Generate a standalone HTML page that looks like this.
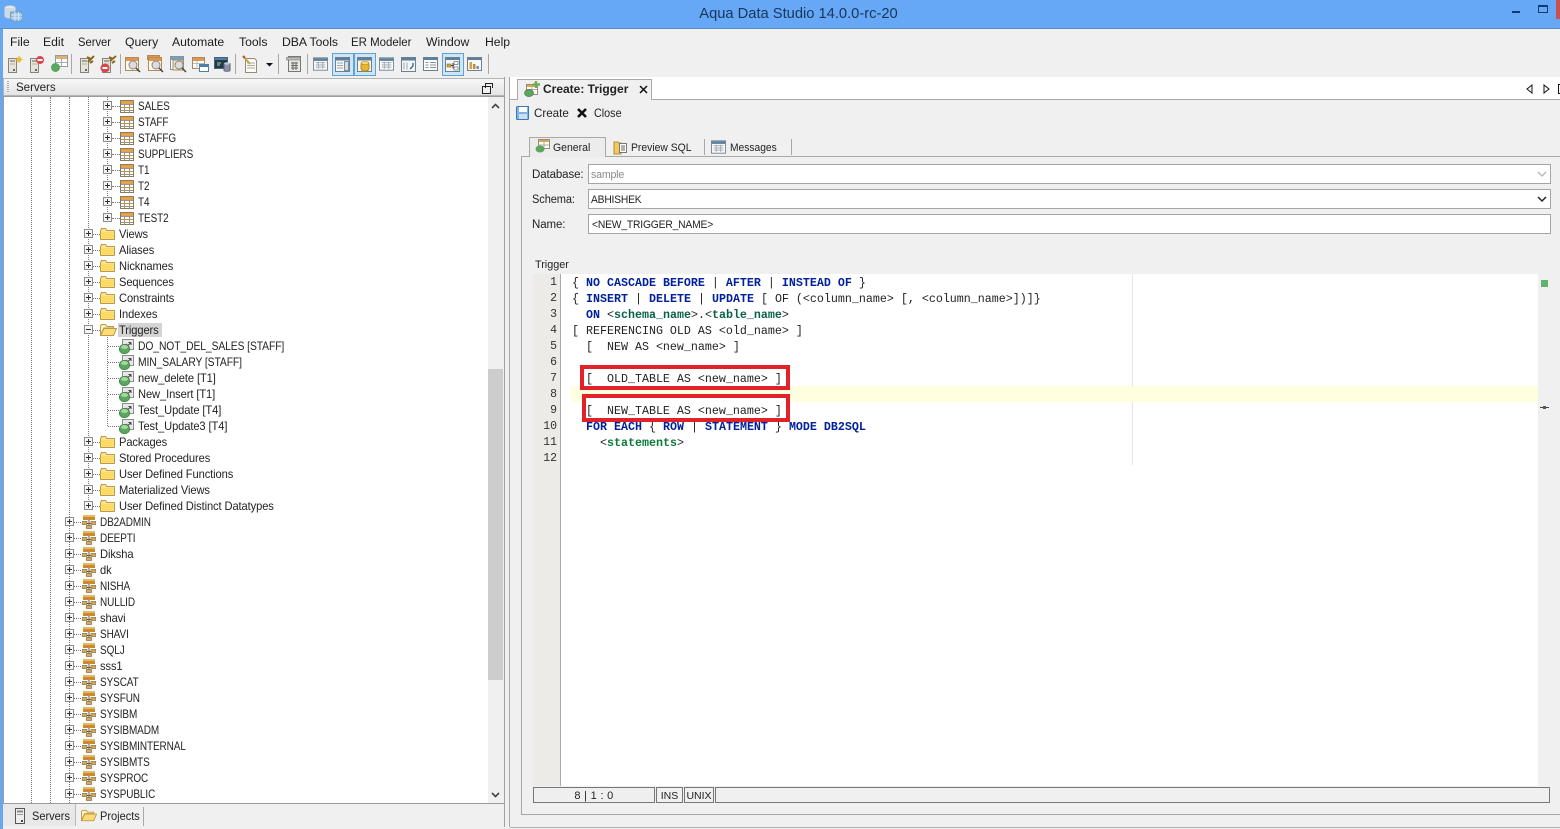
<!DOCTYPE html>
<html><head><meta charset="utf-8"><title>Aqua Data Studio</title>
<style>
html,body{margin:0;padding:0;width:1560px;height:829px;overflow:hidden;background:#f0f0f0}
body{position:relative;font:12px/16px "Liberation Sans",sans-serif;color:#222}
.a,.r,.m,.t,.h,.v,svg.i{position:absolute}
.m{top:34px;font-size:12.2px;color:#1c1c1c}
.r{height:16px;white-space:nowrap;font-size:11.6px;letter-spacing:-.1px}
.r span{top:1px;transform-origin:0 0;transform:scaleX(.96)}
.r.u span{transform:scaleX(.86)}
.r.w span{transform:scaleX(.89)}
.h{height:0;border-top:1px dotted #777}
.v{width:0;border-left:1px dotted #777}
.c{position:absolute;left:0;white-space:pre;font:11.66px/16px "Liberation Mono",monospace;color:#222}
.b{font-weight:bold;color:#00209c}.g{font-weight:bold;color:#0a7a3a}
.n{position:absolute;left:533px;width:24px;margin-top:1px;text-align:right;font:11.5px/16px "Liberation Mono",monospace;color:#333}
.f{position:absolute;left:588px;height:18px;background:#fff;border:1px solid #a5a5a5;line-height:20px;font-size:11.4px;letter-spacing:-.2px;padding-left:2px;box-sizing:content-box;width:959px}
.f span{display:inline-block;transform-origin:0 50%;transform:scaleX(.93)}
.l{position:absolute;left:532px;font-size:11.5px;letter-spacing:-.1px}
.sep{position:absolute;top:54px;width:1px;height:20px;background:#a8a8a8}
.hl{position:absolute;top:53px;height:21px;background:#cde6f7;border:1px solid #5ea3d6;box-sizing:content-box}
.sx{transform-origin:0 0;transform:scaleX(.92)}
</style></head><body>
<svg width="0" height="0" style="position:absolute"><defs>
<symbol id="tb" viewBox="0 0 14 13"><rect x=".5" y=".5" width="13" height="12" fill="#fff" stroke="#8a7b62"/><rect x="1" y="1" width="12" height="3" fill="#e3a24e"/><path d="M1 4.500h12M1 7.500h12M1 10.500h12M4.500 4v8M9.500 4v8" stroke="#a8946f" fill="none"/></symbol>
<symbol id="fo" viewBox="0 0 15 12"><path d="M.5 2.500V11c0 .3.2.5.5.5h13c.3 0 .5-.2.5-.5V3c0-.3-.2-.5-.5-.5H7L5.500.5H1.500z" fill="#fbe38a" stroke="#b99a45"/><rect x="1.500" y="4" width="12" height="6.500" fill="#fdd966"/></symbol>
<symbol id="fx" viewBox="0 0 17 12"><path d="M.5 11V2L1.500.5h4L7 2.500h6.500V4H4z" fill="#fff3c0" stroke="#b99a45"/><path d="M.5 11.500L4 4.500h12.500l-3 7z" fill="#fbdc78" stroke="#b99a45"/></symbol>
<symbol id="sc" viewBox="0 0 14 14"><rect x="1" y="0" width="12" height="5" fill="#c98a2e"/><rect x="1" y="0" width="12" height="2" fill="#e7b66a"/><path d="M7 5v7M1 8.500h12" stroke="#6d5a36"/><rect x="0" y="6.500" width="5" height="3" fill="#d9a95b" stroke="#6d5a36" stroke-width=".6"/><rect x="9" y="6.500" width="5" height="3" fill="#d9a95b" stroke="#6d5a36" stroke-width=".6"/><rect x="4.500" y="10.500" width="5" height="3" fill="#d9a95b" stroke="#6d5a36" stroke-width=".6"/></symbol>
<symbol id="tr" viewBox="0 0 15 15"><rect x="3.500" y=".5" width="11" height="10" fill="#e8e8e8" stroke="#8c8c8c"/><path d="M7 5l2 1.500 3-3M12 3.500v2.500M12 3.500H9.500" fill="none" stroke="#444"/><ellipse cx="5.500" cy="10" rx="5.200" ry="4.700" fill="#5aa75f" stroke="#3d7c44" stroke-width=".7"/><ellipse cx="5.500" cy="8" rx="3.500" ry="2" fill="#a6d6a4"/></symbol>
<symbol id="srv" viewBox="0 0 12 17"><rect x="1.500" y="4.500" width="8" height="12" fill="#eee" stroke="#555"/><rect x="3" y="6" width="5" height="2" fill="#999"/><rect x="3" y="9" width="5" height="1" fill="#aaa"/><rect x="6.500" y="13" width="2" height="2" fill="#555"/></symbol>
<symbol id="blu" viewBox="0 0 17 15"><rect x=".5" y=".5" width="16" height="14" fill="#fafafa" stroke="#6e7f8f"/><rect x="1" y="1" width="15" height="3" fill="#5c7f9e"/><path d="M3 6h11M3 8.500h11M3 11h11M6 5v8M11 5v8" stroke="#9aa7b2"/></symbol>
<symbol id="mag" viewBox="0 0 17 17"><rect x=".5" y="1.500" width="13" height="13" fill="#fff8ec" stroke="#b08a5a"/><rect x="1" y="2" width="12" height="3" fill="#e0964a"/><circle cx="8" cy="9" r="4" fill="#dcdcdc" stroke="#888"/><path d="M11 12l4 4" stroke="#444" stroke-width="1.500"/></symbol>
<symbol id="sv2" viewBox="0 0 19 19"><rect x="3.500" y="3.500" width="8" height="14" fill="#e6e3d8" stroke="#85847a"/><rect x="5" y="5" width="5" height="2" fill="#a5a39a"/><rect x="5" y="8.500" width="5" height="1" fill="#b5b3aa"/><rect x="8" y="14" width="2" height="2" fill="#666"/></symbol>
<g id="px"><rect x=".5" y=".5" width="8" height="8" fill="#f4f4f4" stroke="#8d8d8d"/><path d="M2 4.500h5M4.500 2v5" stroke="#333"/></g><g id="mn"><rect x=".5" y=".5" width="8" height="8" fill="#f4f4f4" stroke="#8d8d8d"/><path d="M2 4.500h5" stroke="#333"/></g>
</defs></svg>

<!-- title bar -->
<div class="a" style="left:0;top:0;width:1560px;height:28px;background:#66a8f5;border-bottom:1px solid #5b8fc9"></div>
<svg class="i" style="left:3px;top:4px" width="19" height="18" viewBox="0 0 19 18"><ellipse cx="7" cy="4" rx="5.500" ry="2.500" fill="#dfe9f2" stroke="#aebfcd"/><path d="M1.500 4v8c0 1.300 2.500 2.500 5.500 2.500V4" fill="#cdd9e4"/><path d="M12.500 4v4H7V4z" fill="#cdd9e4"/><rect x="8" y="8" width="11" height="9" fill="#9dc2de" stroke="#6f9cbc"/><path d="M8 11h11M8 14h11M12 8v9M15.500 8v9" stroke="#d5e6f2"/></svg>
<div class="a" style="left:0;top:6px;width:1597px;text-align:center;font-size:14.7px;line-height:17px;color:#17365d">Aqua Data Studio 14.0.0-rc-20</div>
<div class="a" style="left:1512px;top:11px;width:8px;height:2px;background:#0f3b6e"></div>
<div class="a" style="left:1538px;top:5px;width:8px;height:5px;border:1px solid #0f3b6e;border-top-width:2px"></div>
<div class="a" style="left:1556px;top:0;width:4px;height:19px;background:#c75050"></div>
<div class="a" style="left:0;top:29px;width:3px;height:800px;background:#6aa6ee"></div>

<!-- menu -->
<div class="m" style="left:10px">File</div><div class="m" style="left:43px">Edit</div><div class="m sx" style="left:78px">Server</div><div class="m" style="left:125px">Query</div><div class="m" style="left:172px">Automate</div><div class="m" style="left:239px">Tools</div><div class="m" style="left:282px">DBA Tools</div><div class="m" style="left:351px;transform-origin:0 0;transform:scaleX(.94)">ER Modeler</div><div class="m" style="left:426px">Window</div><div class="m" style="left:485px">Help</div>

<!-- toolbar -->
<div class="hl" style="left:332px;width:20px"></div><div class="hl" style="left:354px;width:20px"></div><div class="hl" style="left:442px;width:20px"></div>
<div class="sep" style="left:71px"></div><div class="sep" style="left:120px"></div><div class="sep" style="left:235px"></div><div class="sep" style="left:278px"></div><div class="sep" style="left:307px"></div><div class="sep" style="left:488px"></div>
<svg class="i" style="left:5px;top:55px" width="19" height="19"><use href="#sv2"/><path d="M14 1v7M10.500 4.500h7M12 2.500l4 4M16 2.500l-4 4" stroke="#e8b830" stroke-width="1.200"/></svg>
<svg class="i" style="left:27px;top:55px" width="19" height="19"><use href="#sv2"/><circle cx="13" cy="5" r="4" fill="#d9474b"/><rect x="10.500" y="4" width="5" height="2" fill="#fff"/></svg>
<svg class="i" style="left:50px;top:55px" width="19" height="19"><rect x="5.500" y=".5" width="12" height="11" fill="#fff" stroke="#999"/><rect x="6" y="1" width="11" height="3" fill="#d9b27a"/><path d="M6 7.500h11M11.500 4v7" stroke="#aaa"/><circle cx="5.500" cy="12.500" r="4.500" fill="#5aa75f"/></svg>
<svg class="i" style="left:77px;top:55px" width="19" height="19"><use href="#sv2"/><path d="M11 7l6-6M10 2l4 2M13 8l3-2" stroke="#8a6a20" stroke-width="2"/></svg>
<svg class="i" style="left:99px;top:55px" width="19" height="19"><use href="#sv2"/><path d="M11 6l6-5M10 2l4 2M13 8l3-2" stroke="#8a6a20" stroke-width="2"/><circle cx="6" cy="13" r="4.500" fill="#d9474b"/><rect x="3.500" y="12" width="5" height="2" fill="#fff"/></svg>
<svg class="i" style="left:125px;top:56px" width="17" height="17"><use href="#mag"/></svg>
<svg class="i" style="left:147px;top:55px" width="18" height="18"><rect x=".5" y=".5" width="12" height="4" fill="#e0964a" stroke="#b08a5a"/><use href="#mag" x="1" y="1" width="17" height="17"/></svg>
<svg class="i" style="left:170px;top:56px" width="17" height="17"><rect x=".5" y=".5" width="13" height="13" fill="#fff" stroke="#7f96a9"/><rect x="1" y="1" width="12" height="3" fill="#7ca0bc"/><rect x="3" y="4" width="10" height="10" fill="#f1e6d3" stroke="#b08a5a"/><circle cx="9" cy="9" r="4" fill="#ddd" stroke="#888"/><path d="M12 12l4 4" stroke="#444" stroke-width="1.500"/></svg>
<svg class="i" style="left:192px;top:57px" width="17" height="15"><rect x=".5" y=".5" width="12" height="11" fill="#fff" stroke="#a88a62"/><rect x="1" y="1" width="11" height="3" fill="#df9850"/><path d="M1 6.500h11M5 4v8" stroke="#bbb"/><rect x="7.500" y="7.500" width="9" height="7" fill="#fff" stroke="#4f7fa6"/><rect x="8" y="8" width="8" height="2" fill="#4f7fa6"/></svg>
<svg class="i" style="left:214px;top:57px" width="17" height="15"><rect x=".5" y=".5" width="13" height="11" fill="#26374a" stroke="#46627e"/><rect x="1" y="1" width="12" height="2" fill="#4d7ea8"/><path d="M3 6h4M3 8h3" stroke="#9fe08f"/><path d="M10 6.500v7c0 1 6 1 6 0v-7z" fill="#8a94a4" stroke="#59657a"/><ellipse cx="13" cy="6.500" rx="3" ry="1.300" fill="#c0c8d4"/></svg>
<svg class="i" style="left:242px;top:55px" width="17" height="19"><path d="M3.500 3.500h9l2 2v12h-11z" fill="#fdfdf6" stroke="#8e8e7e"/><path d="M5 8h8M5 10.500h8M5 13h8" stroke="#a6a89a"/><path d="M1 1l7 8" stroke="#c9a04a" stroke-width="2"/><path d="M1 1l2 2" stroke="#c24b3f" stroke-width="2"/></svg>
<svg class="i" style="left:266px;top:63px" width="7" height="4"><path d="M0 0h7L3.500 3.500z" fill="#111"/></svg>
<svg class="i" style="left:286px;top:56px" width="16" height="17"><rect x="2.500" y=".5" width="12" height="15" fill="#e9e9e4" stroke="#777"/><rect x=".5" y="1.500" width="14" height="2.500" fill="#bbb" stroke="#777" stroke-width=".6"/><path d="M5 7h7M5 9.500h7M5 12h7M7 6v8M10 6v8" stroke="#666"/></svg>
<svg class="i" style="left:313px;top:57px" width="15" height="14"><use href="#blu" width="15" height="14"/></svg>
<svg class="i" style="left:335px;top:57px" width="15" height="15"><rect x=".5" y=".5" width="14" height="14" fill="#f5f5f5" stroke="#6e7f8f"/><rect x="1" y="1" width="13" height="2.500" fill="#5c7f9e"/><path d="M2 6h6M2 8.500h6M2 11h6" stroke="#9aa7b2"/><rect x="9.500" y="4.500" width="4" height="9" fill="#d6dde3" stroke="#7f8d99"/></svg>
<svg class="i" style="left:357px;top:57px" width="15" height="15"><rect x=".5" y=".5" width="14" height="14" fill="#f5f5f5" stroke="#6e7f8f"/><rect x="1" y="1" width="13" height="2.500" fill="#5c7f9e"/><rect x="4" y="5" width="8" height="9" rx="3" fill="#eab52f" stroke="#b58a20"/><ellipse cx="8" cy="6" rx="4" ry="1.500" fill="#f6d878" stroke="#b58a20" stroke-width=".6"/></svg>
<svg class="i" style="left:379px;top:57px" width="15" height="14"><use href="#blu" width="15" height="14"/></svg>
<svg class="i" style="left:401px;top:57px" width="15" height="15"><rect x=".5" y=".5" width="14" height="14" fill="#f5f5f5" stroke="#6e7f8f"/><rect x="1" y="1" width="13" height="2.500" fill="#5c7f9e"/><path d="M3 5.500v7M6 5.500v7" stroke="#9aa7b2"/><path d="M9 12l3-3M12 9v-3" stroke="#345f84" stroke-width="1.300"/></svg>
<svg class="i" style="left:423px;top:57px" width="15" height="14"><rect x=".5" y=".5" width="14" height="13" fill="#fbfbfb" stroke="#6e7f8f"/><rect x="1" y="1" width="13" height="2" fill="#5c7f9e"/><path d="M2.500 5.500h3M2.500 8h3M2.500 10.500h3M7 5.500h6M7 8h6M7 10.500h6" stroke="#8795a1"/></svg>
<svg class="i" style="left:445px;top:57px" width="15" height="15"><rect x=".5" y=".5" width="14" height="14" fill="#f8f8f8" stroke="#6e7f8f"/><rect x="1" y="1" width="13" height="2" fill="#5c7f9e"/><rect x="2" y="7" width="4" height="3" fill="#d9a344" stroke="#8c6a25" stroke-width=".6"/><rect x="9" y="4.500" width="4" height="3" fill="#fff" stroke="#555" stroke-width=".6"/><rect x="9" y="10" width="4" height="3" fill="#fff" stroke="#555" stroke-width=".6"/><path d="M6 8.500h3M8 6v5.500" stroke="#444" fill="none"/></svg>
<svg class="i" style="left:467px;top:57px" width="15" height="15"><rect x=".5" y=".5" width="14" height="13" fill="#f8f8f8" stroke="#6e7f8f"/><rect x="1" y="1" width="13" height="2" fill="#5c7f9e"/><rect x="2.500" y="5" width="2.500" height="7" fill="#d9a344"/><rect x="6" y="7" width="2.500" height="5" fill="#c8874a"/><rect x="9.500" y="9" width="2.500" height="3" fill="#6f90ae"/></svg>

<!-- left panel -->
<div class="a" style="left:3px;top:78px;width:502px;background:linear-gradient(#f7f7f7,#e4e4e4);border:1px solid #b4b4b4;box-sizing:border-box;height:18px"></div>
<div class="a" style="left:7px;top:81px;width:2px;height:12px;background:repeating-linear-gradient(#aaa 0 1px,#f0f0f0 1px 2px)"></div>
<div class="a" style="left:16px;top:80px;font-size:11.6px;letter-spacing:-.05px">Servers</div>
<div class="a" style="left:482px;top:86px;width:7px;height:6px;border:1px solid #222;background:#f0f0f0"></div>
<div class="a" style="left:485px;top:83px;width:6px;height:4px;border:1px solid #222;border-bottom:0"></div>
<div class="a" style="left:3px;top:96px;width:502px;height:708px;background:#fff;border:1px solid #9c9c9c;box-sizing:border-box"></div>
<div class="a" style="left:488px;top:97px;width:16px;height:706px;background:#f0f0f0"></div>
<div class="a" style="left:488px;top:369px;width:15px;height:311px;background:#cdcdcd"></div>
<svg class="i" style="left:491px;top:103px" width="9" height="6"><path d="M1 5l3.500-3.500L8 5" fill="none" stroke="#444" stroke-width="1.600"/></svg>
<svg class="i" style="left:491px;top:792px" width="9" height="6"><path d="M1 1l3.500 3.500L8 1" fill="none" stroke="#444" stroke-width="1.600"/></svg>
<div class="a" style="left:504px;top:77px;width:1px;height:750px;background:#a0a0a0"></div>

<!-- tree guide lines -->
<div class="v" style="left:31px;top:97px;height:706px"></div>
<div class="v" style="left:50px;top:97px;height:706px"></div>
<div class="v" style="left:69px;top:97px;height:706px"></div>
<div class="v" style="left:88px;top:97px;height:409px"></div>
<div class="v" style="left:107px;top:97px;height:121px"></div>
<div class="v" style="left:107px;top:334px;height:92px"></div>

<!-- level 3 tables -->
<div class="r u" style="left:103px;top:98px;width:200px"><svg class="i" style="left:0;top:3px" width="9" height="9"><use href="#px"/></svg><div class="h" style="left:9px;top:8px;width:8px"></div><svg class="i" style="left:17px;top:2px" width="14" height="13"><use href="#tb"/></svg><span class="a" style="left:35px">SALES</span></div>
<div class="r u" style="left:103px;top:114px;width:200px"><svg class="i" style="left:0;top:3px" width="9" height="9"><use href="#px"/></svg><div class="h" style="left:9px;top:8px;width:8px"></div><svg class="i" style="left:17px;top:2px" width="14" height="13"><use href="#tb"/></svg><span class="a" style="left:35px">STAFF</span></div>
<div class="r u" style="left:103px;top:130px;width:200px"><svg class="i" style="left:0;top:3px" width="9" height="9"><use href="#px"/></svg><div class="h" style="left:9px;top:8px;width:8px"></div><svg class="i" style="left:17px;top:2px" width="14" height="13"><use href="#tb"/></svg><span class="a" style="left:35px">STAFFG</span></div>
<div class="r u" style="left:103px;top:146px;width:200px"><svg class="i" style="left:0;top:3px" width="9" height="9"><use href="#px"/></svg><div class="h" style="left:9px;top:8px;width:8px"></div><svg class="i" style="left:17px;top:2px" width="14" height="13"><use href="#tb"/></svg><span class="a" style="left:35px">SUPPLIERS</span></div>
<div class="r u" style="left:103px;top:162px;width:200px"><svg class="i" style="left:0;top:3px" width="9" height="9"><use href="#px"/></svg><div class="h" style="left:9px;top:8px;width:8px"></div><svg class="i" style="left:17px;top:2px" width="14" height="13"><use href="#tb"/></svg><span class="a" style="left:35px">T1</span></div>
<div class="r u" style="left:103px;top:178px;width:200px"><svg class="i" style="left:0;top:3px" width="9" height="9"><use href="#px"/></svg><div class="h" style="left:9px;top:8px;width:8px"></div><svg class="i" style="left:17px;top:2px" width="14" height="13"><use href="#tb"/></svg><span class="a" style="left:35px">T2</span></div>
<div class="r u" style="left:103px;top:194px;width:200px"><svg class="i" style="left:0;top:3px" width="9" height="9"><use href="#px"/></svg><div class="h" style="left:9px;top:8px;width:8px"></div><svg class="i" style="left:17px;top:2px" width="14" height="13"><use href="#tb"/></svg><span class="a" style="left:35px">T4</span></div>
<div class="r u" style="left:103px;top:210px;width:200px"><svg class="i" style="left:0;top:3px" width="9" height="9"><use href="#px"/></svg><div class="h" style="left:9px;top:8px;width:8px"></div><svg class="i" style="left:17px;top:2px" width="14" height="13"><use href="#tb"/></svg><span class="a" style="left:35px">TEST2</span></div>

<!-- folders -->
<div class="r" style="left:84px;top:226px;width:240px"><svg class="i" style="left:0;top:3px" width="9" height="9"><use href="#px"/></svg><div class="h" style="left:9px;top:8px;width:7px"></div><svg class="i" style="left:16px;top:2px" width="15" height="12"><use href="#fo"/></svg><span class="a" style="left:35px">Views</span></div>
<div class="r" style="left:84px;top:242px;width:240px"><svg class="i" style="left:0;top:3px" width="9" height="9"><use href="#px"/></svg><div class="h" style="left:9px;top:8px;width:7px"></div><svg class="i" style="left:16px;top:2px" width="15" height="12"><use href="#fo"/></svg><span class="a" style="left:35px">Aliases</span></div>
<div class="r" style="left:84px;top:258px;width:240px"><svg class="i" style="left:0;top:3px" width="9" height="9"><use href="#px"/></svg><div class="h" style="left:9px;top:8px;width:7px"></div><svg class="i" style="left:16px;top:2px" width="15" height="12"><use href="#fo"/></svg><span class="a" style="left:35px">Nicknames</span></div>
<div class="r" style="left:84px;top:274px;width:240px"><svg class="i" style="left:0;top:3px" width="9" height="9"><use href="#px"/></svg><div class="h" style="left:9px;top:8px;width:7px"></div><svg class="i" style="left:16px;top:2px" width="15" height="12"><use href="#fo"/></svg><span class="a" style="left:35px">Sequences</span></div>
<div class="r" style="left:84px;top:290px;width:240px"><svg class="i" style="left:0;top:3px" width="9" height="9"><use href="#px"/></svg><div class="h" style="left:9px;top:8px;width:7px"></div><svg class="i" style="left:16px;top:2px" width="15" height="12"><use href="#fo"/></svg><span class="a" style="left:35px">Constraints</span></div>
<div class="r" style="left:84px;top:306px;width:240px"><svg class="i" style="left:0;top:3px" width="9" height="9"><use href="#px"/></svg><div class="h" style="left:9px;top:8px;width:7px"></div><svg class="i" style="left:16px;top:2px" width="15" height="12"><use href="#fo"/></svg><span class="a" style="left:35px">Indexes</span></div>
<div class="a" style="left:118px;top:323px;width:44px;height:14px;background:#d4d4d4"></div>
<div class="r" style="left:84px;top:322px;width:240px"><svg class="i" style="left:0;top:3px" width="9" height="9"><use href="#mn"/></svg><div class="h" style="left:9px;top:8px;width:7px"></div><svg class="i" style="left:16px;top:2px" width="17" height="12"><use href="#fx"/></svg><span class="a" style="left:35px">Triggers</span></div>
<!-- triggers -->
<div class="r w" style="left:108px;top:338px;width:240px"><div class="h" style="left:0;top:8px;width:11px"></div><svg class="i" style="left:11px;top:1px" width="15" height="15"><use href="#tr"/></svg><span class="a" style="left:30px">DO_NOT_DEL_SALES [STAFF]</span></div>
<div class="r w" style="left:108px;top:354px;width:240px"><div class="h" style="left:0;top:8px;width:11px"></div><svg class="i" style="left:11px;top:1px" width="15" height="15"><use href="#tr"/></svg><span class="a" style="left:30px">MIN_SALARY [STAFF]</span></div>
<div class="r" style="left:108px;top:370px;width:240px"><div class="h" style="left:0;top:8px;width:11px"></div><svg class="i" style="left:11px;top:1px" width="15" height="15"><use href="#tr"/></svg><span class="a" style="left:30px">new_delete [T1]</span></div>
<div class="r" style="left:108px;top:386px;width:240px"><div class="h" style="left:0;top:8px;width:11px"></div><svg class="i" style="left:11px;top:1px" width="15" height="15"><use href="#tr"/></svg><span class="a" style="left:30px">New_Insert [T1]</span></div>
<div class="r" style="left:108px;top:402px;width:240px"><div class="h" style="left:0;top:8px;width:11px"></div><svg class="i" style="left:11px;top:1px" width="15" height="15"><use href="#tr"/></svg><span class="a" style="left:30px">Test_Update [T4]</span></div>
<div class="r" style="left:108px;top:418px;width:240px"><div class="h" style="left:0;top:8px;width:11px"></div><svg class="i" style="left:11px;top:1px" width="15" height="15"><use href="#tr"/></svg><span class="a" style="left:30px">Test_Update3 [T4]</span></div>
<div class="r" style="left:84px;top:434px;width:240px"><svg class="i" style="left:0;top:3px" width="9" height="9"><use href="#px"/></svg><div class="h" style="left:9px;top:8px;width:7px"></div><svg class="i" style="left:16px;top:2px" width="15" height="12"><use href="#fo"/></svg><span class="a" style="left:35px">Packages</span></div>
<div class="r" style="left:84px;top:450px;width:240px"><svg class="i" style="left:0;top:3px" width="9" height="9"><use href="#px"/></svg><div class="h" style="left:9px;top:8px;width:7px"></div><svg class="i" style="left:16px;top:2px" width="15" height="12"><use href="#fo"/></svg><span class="a" style="left:35px">Stored Procedures</span></div>
<div class="r" style="left:84px;top:466px;width:240px"><svg class="i" style="left:0;top:3px" width="9" height="9"><use href="#px"/></svg><div class="h" style="left:9px;top:8px;width:7px"></div><svg class="i" style="left:16px;top:2px" width="15" height="12"><use href="#fo"/></svg><span class="a" style="left:35px">User Defined Functions</span></div>
<div class="r" style="left:84px;top:482px;width:240px"><svg class="i" style="left:0;top:3px" width="9" height="9"><use href="#px"/></svg><div class="h" style="left:9px;top:8px;width:7px"></div><svg class="i" style="left:16px;top:2px" width="15" height="12"><use href="#fo"/></svg><span class="a" style="left:35px">Materialized Views</span></div>
<div class="r" style="left:84px;top:498px;width:240px"><svg class="i" style="left:0;top:3px" width="9" height="9"><use href="#px"/></svg><div class="h" style="left:9px;top:8px;width:7px"></div><svg class="i" style="left:16px;top:2px" width="15" height="12"><use href="#fo"/></svg><span class="a" style="left:35px">User Defined Distinct Datatypes</span></div>
<!-- schemas -->
<div class="r u" style="left:65px;top:514px;width:200px"><svg class="i" style="left:0;top:3px" width="9" height="9"><use href="#px"/></svg><div class="h" style="left:9px;top:8px;width:7px"></div><svg class="i" style="left:17px;top:1px" width="14" height="14"><use href="#sc"/></svg><span class="a" style="left:35px">DB2ADMIN</span></div>
<div class="r u" style="left:65px;top:530px;width:200px"><svg class="i" style="left:0;top:3px" width="9" height="9"><use href="#px"/></svg><div class="h" style="left:9px;top:8px;width:7px"></div><svg class="i" style="left:17px;top:1px" width="14" height="14"><use href="#sc"/></svg><span class="a" style="left:35px">DEEPTI</span></div>
<div class="r" style="left:65px;top:546px;width:200px"><svg class="i" style="left:0;top:3px" width="9" height="9"><use href="#px"/></svg><div class="h" style="left:9px;top:8px;width:7px"></div><svg class="i" style="left:17px;top:1px" width="14" height="14"><use href="#sc"/></svg><span class="a" style="left:35px">Diksha</span></div>
<div class="r" style="left:65px;top:562px;width:200px"><svg class="i" style="left:0;top:3px" width="9" height="9"><use href="#px"/></svg><div class="h" style="left:9px;top:8px;width:7px"></div><svg class="i" style="left:17px;top:1px" width="14" height="14"><use href="#sc"/></svg><span class="a" style="left:35px">dk</span></div>
<div class="r u" style="left:65px;top:578px;width:200px"><svg class="i" style="left:0;top:3px" width="9" height="9"><use href="#px"/></svg><div class="h" style="left:9px;top:8px;width:7px"></div><svg class="i" style="left:17px;top:1px" width="14" height="14"><use href="#sc"/></svg><span class="a" style="left:35px">NISHA</span></div>
<div class="r u" style="left:65px;top:594px;width:200px"><svg class="i" style="left:0;top:3px" width="9" height="9"><use href="#px"/></svg><div class="h" style="left:9px;top:8px;width:7px"></div><svg class="i" style="left:17px;top:1px" width="14" height="14"><use href="#sc"/></svg><span class="a" style="left:35px">NULLID</span></div>
<div class="r" style="left:65px;top:610px;width:200px"><svg class="i" style="left:0;top:3px" width="9" height="9"><use href="#px"/></svg><div class="h" style="left:9px;top:8px;width:7px"></div><svg class="i" style="left:17px;top:1px" width="14" height="14"><use href="#sc"/></svg><span class="a" style="left:35px">shavi</span></div>
<div class="r u" style="left:65px;top:626px;width:200px"><svg class="i" style="left:0;top:3px" width="9" height="9"><use href="#px"/></svg><div class="h" style="left:9px;top:8px;width:7px"></div><svg class="i" style="left:17px;top:1px" width="14" height="14"><use href="#sc"/></svg><span class="a" style="left:35px">SHAVI</span></div>
<div class="r u" style="left:65px;top:642px;width:200px"><svg class="i" style="left:0;top:3px" width="9" height="9"><use href="#px"/></svg><div class="h" style="left:9px;top:8px;width:7px"></div><svg class="i" style="left:17px;top:1px" width="14" height="14"><use href="#sc"/></svg><span class="a" style="left:35px">SQLJ</span></div>
<div class="r" style="left:65px;top:658px;width:200px"><svg class="i" style="left:0;top:3px" width="9" height="9"><use href="#px"/></svg><div class="h" style="left:9px;top:8px;width:7px"></div><svg class="i" style="left:17px;top:1px" width="14" height="14"><use href="#sc"/></svg><span class="a" style="left:35px">sss1</span></div>
<div class="r u" style="left:65px;top:674px;width:200px"><svg class="i" style="left:0;top:3px" width="9" height="9"><use href="#px"/></svg><div class="h" style="left:9px;top:8px;width:7px"></div><svg class="i" style="left:17px;top:1px" width="14" height="14"><use href="#sc"/></svg><span class="a" style="left:35px">SYSCAT</span></div>
<div class="r u" style="left:65px;top:690px;width:200px"><svg class="i" style="left:0;top:3px" width="9" height="9"><use href="#px"/></svg><div class="h" style="left:9px;top:8px;width:7px"></div><svg class="i" style="left:17px;top:1px" width="14" height="14"><use href="#sc"/></svg><span class="a" style="left:35px">SYSFUN</span></div>
<div class="r u" style="left:65px;top:706px;width:200px"><svg class="i" style="left:0;top:3px" width="9" height="9"><use href="#px"/></svg><div class="h" style="left:9px;top:8px;width:7px"></div><svg class="i" style="left:17px;top:1px" width="14" height="14"><use href="#sc"/></svg><span class="a" style="left:35px">SYSIBM</span></div>
<div class="r u" style="left:65px;top:722px;width:200px"><svg class="i" style="left:0;top:3px" width="9" height="9"><use href="#px"/></svg><div class="h" style="left:9px;top:8px;width:7px"></div><svg class="i" style="left:17px;top:1px" width="14" height="14"><use href="#sc"/></svg><span class="a" style="left:35px">SYSIBMADM</span></div>
<div class="r u" style="left:65px;top:738px;width:200px"><svg class="i" style="left:0;top:3px" width="9" height="9"><use href="#px"/></svg><div class="h" style="left:9px;top:8px;width:7px"></div><svg class="i" style="left:17px;top:1px" width="14" height="14"><use href="#sc"/></svg><span class="a" style="left:35px">SYSIBMINTERNAL</span></div>
<div class="r u" style="left:65px;top:754px;width:200px"><svg class="i" style="left:0;top:3px" width="9" height="9"><use href="#px"/></svg><div class="h" style="left:9px;top:8px;width:7px"></div><svg class="i" style="left:17px;top:1px" width="14" height="14"><use href="#sc"/></svg><span class="a" style="left:35px">SYSIBMTS</span></div>
<div class="r u" style="left:65px;top:770px;width:200px"><svg class="i" style="left:0;top:3px" width="9" height="9"><use href="#px"/></svg><div class="h" style="left:9px;top:8px;width:7px"></div><svg class="i" style="left:17px;top:1px" width="14" height="14"><use href="#sc"/></svg><span class="a" style="left:35px">SYSPROC</span></div>
<div class="r u" style="left:65px;top:786px;width:200px"><svg class="i" style="left:0;top:3px" width="9" height="9"><use href="#px"/></svg><div class="h" style="left:9px;top:8px;width:7px"></div><svg class="i" style="left:17px;top:1px" width="14" height="14"><use href="#sc"/></svg><span class="a" style="left:35px">SYSPUBLIC</span></div>

<!-- bottom tabs -->
<div class="a" style="left:3px;top:804px;width:72px;height:22px;background:#e8e8e8;border-right:1px solid #bbb"></div>
<svg class="i" style="left:14px;top:808px" width="12" height="17" viewBox="0 0 12 17"><rect x="1.500" y=".5" width="9" height="15" fill="#eee" stroke="#555"/><rect x="3" y="2.500" width="6" height="2" fill="#888"/><rect x="3" y="6" width="6" height="1" fill="#999"/><rect x="7" y="12" width="2" height="2" fill="#444"/></svg>
<div class="a" style="left:32px;top:809px;font-size:11.6px;transform-origin:0 0;transform:scaleX(.95)">Servers</div>
<svg class="i" style="left:81px;top:809px" width="16" height="13"><use href="#fx" width="16" height="13"/></svg>
<div class="a" style="left:100px;top:809px;font-size:11.6px;transform-origin:0 0;transform:scaleX(.95)">Projects</div>
<div class="a" style="left:143px;top:807px;width:1px;height:19px;background:#a9a9a9"></div>

<!-- right side -->
<div class="a" style="left:509px;top:77px;width:1px;height:750px;background:#a8a8a8"></div>
<div class="a" style="left:510px;top:77px;width:1050px;height:22px;background:#fff;border-bottom:1px solid #a8a8a8"></div>
<div class="a" style="left:517px;top:79px;width:135px;height:21px;background:#f0f0f0;border:1px solid #a8a8a8;border-bottom:0;box-sizing:border-box"></div>
<svg class="i" style="left:524px;top:81px" width="16" height="16" viewBox="0 0 16 16"><rect x="2.500" y="3.500" width="11" height="10" fill="#fff" stroke="#9a8f70"/><rect x="3" y="4" width="10" height="2" fill="#d9a752"/><path d="M3 8.500h10M8 6v7" stroke="#aaa"/><ellipse cx="5" cy="12" rx="4.500" ry="3.500" fill="#5aa75f" stroke="#3d7c44" stroke-width=".7"/><path d="M12 0v7M9 3.500h7" stroke="#72ad4f" stroke-width="2.400"/></svg>
<div class="a" style="left:543px;top:81px;font-weight:bold;font-size:12px">Create: Trigger</div>
<svg class="i" style="left:639px;top:85px" width="9" height="9"><path d="M1 1l7 7M8 1l-7 7" stroke="#111" stroke-width="1.500"/></svg>
<svg class="i" style="left:1526px;top:84px" width="7" height="10"><path d="M6 1v8L1 5z" fill="#fff" stroke="#111"/></svg>
<svg class="i" style="left:1543px;top:84px" width="7" height="10"><path d="M1 1v8l5-4z" fill="#fff" stroke="#111"/></svg>
<div class="a" style="left:1558px;top:84px;width:2px;height:8px;border:1px solid #111;border-right:0"></div>

<svg class="i" style="left:516px;top:106px" width="14" height="14" viewBox="0 0 14 14"><path d="M.5 1.500a1 1 0 011-1h11v12a1 1 0 01-1 1h-10a1 1 0 01-1-1z" fill="#7fb2e5" stroke="#3c76b5"/><rect x="3" y="1" width="8" height="5" fill="#fff"/><rect x="3" y="8" width="8" height="5" fill="#cfdfee"/></svg>
<div class="a" style="left:534px;top:106px;font-size:11.6px">Create</div>
<svg class="i" style="left:577px;top:108px" width="10" height="10"><path d="M1 1l8 8M9 1l-8 8" stroke="#111" stroke-width="2.600"/></svg>
<div class="a" style="left:594px;top:106px;font-size:11.6px;transform-origin:0 0;transform:scaleX(.93)">Close</div>

<!-- sub tabs -->
<div class="a" style="left:521px;top:156px;width:1039px;height:659px;border:1px solid #a8a8a8;border-right:0;box-sizing:border-box"></div>
<div class="a" style="left:529px;top:137px;width:77px;height:20px;background:#ececec;border:1px solid #a8a8a8;border-bottom:0;box-sizing:border-box"></div>
<svg class="i" style="left:535px;top:139px" width="15" height="14" viewBox="0 0 15 14"><rect x="3.500" y=".5" width="11" height="9" fill="#fff" stroke="#9a8f70"/><rect x="4" y="1" width="10" height="2" fill="#d9a752"/><path d="M4 6h10M9 3v6" stroke="#aaa"/><ellipse cx="5" cy="10" rx="4.500" ry="3.500" fill="#5aa75f"/></svg>
<div class="a sx" style="left:553px;top:140px;font-size:11.4px">General</div>
<svg class="i" style="left:613px;top:139px" width="15" height="16" viewBox="0 0 15 16"><path d="M1 3h4l1 1h2v11H1z" fill="#f4c95c" stroke="#b08d38"/><rect x="6.500" y="4.500" width="7" height="9" fill="#fff" stroke="#777"/><path d="M8 7h4M8 9h4M8 11h4" stroke="#666"/></svg>
<div class="a" style="left:631px;top:140px;font-size:11.4px;transform-origin:0 0;transform:scaleX(.91)">Preview SQL</div>
<div class="a" style="left:704px;top:139px;width:1px;height:16px;background:#a8a8a8"></div>
<svg class="i" style="left:711px;top:140px" width="15" height="14"><use href="#blu" width="15" height="14"/></svg>
<div class="a" style="left:730px;top:140px;font-size:11.4px;transform-origin:0 0;transform:scaleX(.9)">Messages</div>
<div class="a" style="left:791px;top:139px;width:1px;height:16px;background:#a8a8a8"></div>

<!-- form -->
<div class="l" style="top:167px">Database:</div><div class="l" style="top:192px;transform-origin:0 0;transform:scaleX(.96)">Schema:</div><div class="l" style="top:217px">Name:</div>
<div class="f" style="top:164px;color:#8a8a8a"><span>sample</span></div>
<div class="f" style="top:189px"><span style="transform:scaleX(.9)">ABHISHEK</span></div>
<div class="f" style="top:214px;padding-left:3px;width:958px"><span style="transform:scaleX(.905)">&lt;NEW_TRIGGER_NAME&gt;</span></div>
<svg class="i" style="left:1537px;top:171px" width="10" height="7"><path d="M1 1l4 4 4-4" fill="none" stroke="#b5b5b5" stroke-width="1.300"/></svg>
<svg class="i" style="left:1537px;top:196px" width="10" height="7"><path d="M1 1l4 4 4-4" fill="none" stroke="#222" stroke-width="1.500"/></svg>
<div class="a" style="left:535px;top:257px;font-size:11.4px;transform-origin:0 0;transform:scaleX(.95)">Trigger</div>

<!-- editor -->
<div class="a" style="left:533px;top:274px;width:1005px;height:512px;background:#fff"></div>
<div class="a" style="left:533px;top:274px;width:27px;height:512px;background:#ecebe7;border-right:1px solid #a9a9a9;box-sizing:content-box"></div>
<div class="a" style="left:1132px;top:274px;width:1px;height:191px;background:#e3e3e3"></div>
<div class="a" style="left:571px;top:386px;width:967px;height:16px;background:#ffffe0"></div>
<div class="a" style="left:1541px;top:280px;width:7px;height:7px;background:#63b26c"></div>
<div class="a" style="left:1540px;top:407px;width:9px;height:1px;background:#444"></div>
<div class="a" style="left:1543px;top:406px;width:3px;height:3px;background:#555"></div>

<div class="n" style="top:274px">1</div><div class="n" style="top:290px">2</div><div class="n" style="top:306px">3</div><div class="n" style="top:322px">4</div><div class="n" style="top:338px">5</div><div class="n" style="top:354px">6</div><div class="n" style="top:370px">7</div><div class="n" style="top:386px">8</div><div class="n" style="top:402px">9</div><div class="n" style="top:418px">10</div><div class="n" style="top:434px">11</div><div class="n" style="top:450px">12</div>

<div class="a" style="left:572px;top:1px;width:600px;height:500px">
<div class="c" style="top:274px">{ <span class="b">NO CASCADE BEFORE</span> | <span class="b">AFTER</span> | <span class="b">INSTEAD OF</span> }</div>
<div class="c" style="top:290px">{ <span class="b">INSERT</span> | <span class="b">DELETE</span> | <span class="b">UPDATE</span> [ OF (&lt;column_name&gt; [, &lt;column_name&gt;])]}</div>
<div class="c" style="top:306px">  <span class="b">ON</span> &lt;<span class="g" style="color:#0a5f4a">schema_name</span>&gt;.&lt;<span class="g" style="color:#0a5f4a">table_name</span>&gt;</div>
<div class="c" style="top:322px">[ REFERENCING OLD AS &lt;old_name&gt; ]</div>
<div class="c" style="top:338px">  [  NEW AS &lt;new_name&gt; ]</div>
<div class="c" style="top:418px">  <span class="b">FOR EACH</span> { <span class="b">ROW</span> | <span class="b">STATEMENT</span> } <span class="b">MODE DB2SQL</span></div>
<div class="c" style="top:434px">    &lt;<span class="g">statements</span>&gt;</div>
</div>
<!-- red boxes -->
<div class="a" style="left:580px;top:365px;width:210px;height:25px;border:4px solid #e1222b;box-sizing:border-box;background:#fff"></div>
<div class="a" style="left:582px;top:394px;width:208px;height:28px;border:4px solid #e1222b;box-sizing:border-box;background:#fff"></div>
<div class="a" style="left:572px;top:1px;width:300px;height:500px">
<div class="c" style="top:370px">  [  OLD_TABLE AS &lt;new_name&gt; ]</div>
<div class="c" style="top:402px">  [  NEW_TABLE AS &lt;new_name&gt; ]</div>
</div>

<!-- status bar -->
<div class="a" style="left:533px;top:787px;width:122px;height:16px;border:1px solid #777;box-sizing:border-box;background:#efefef;text-align:center;font-size:11px;line-height:16px;letter-spacing:.3px">8 | 1 : 0</div>
<div class="a" style="left:656px;top:787px;width:27px;height:16px;border:1px solid #777;box-sizing:border-box;text-align:center;font-size:10.5px;line-height:16px">INS</div>
<div class="a" style="left:684px;top:787px;width:30px;height:16px;border:1px solid #777;box-sizing:border-box;text-align:center;font-size:10.5px;line-height:16px">UNIX</div>
<div class="a" style="left:715px;top:787px;width:835px;height:16px;border:1px solid #777;box-sizing:border-box"></div>
<div class="a" style="left:510px;top:827px;width:1050px;height:1px;background:#b0b0b0"></div>
</body></html>
